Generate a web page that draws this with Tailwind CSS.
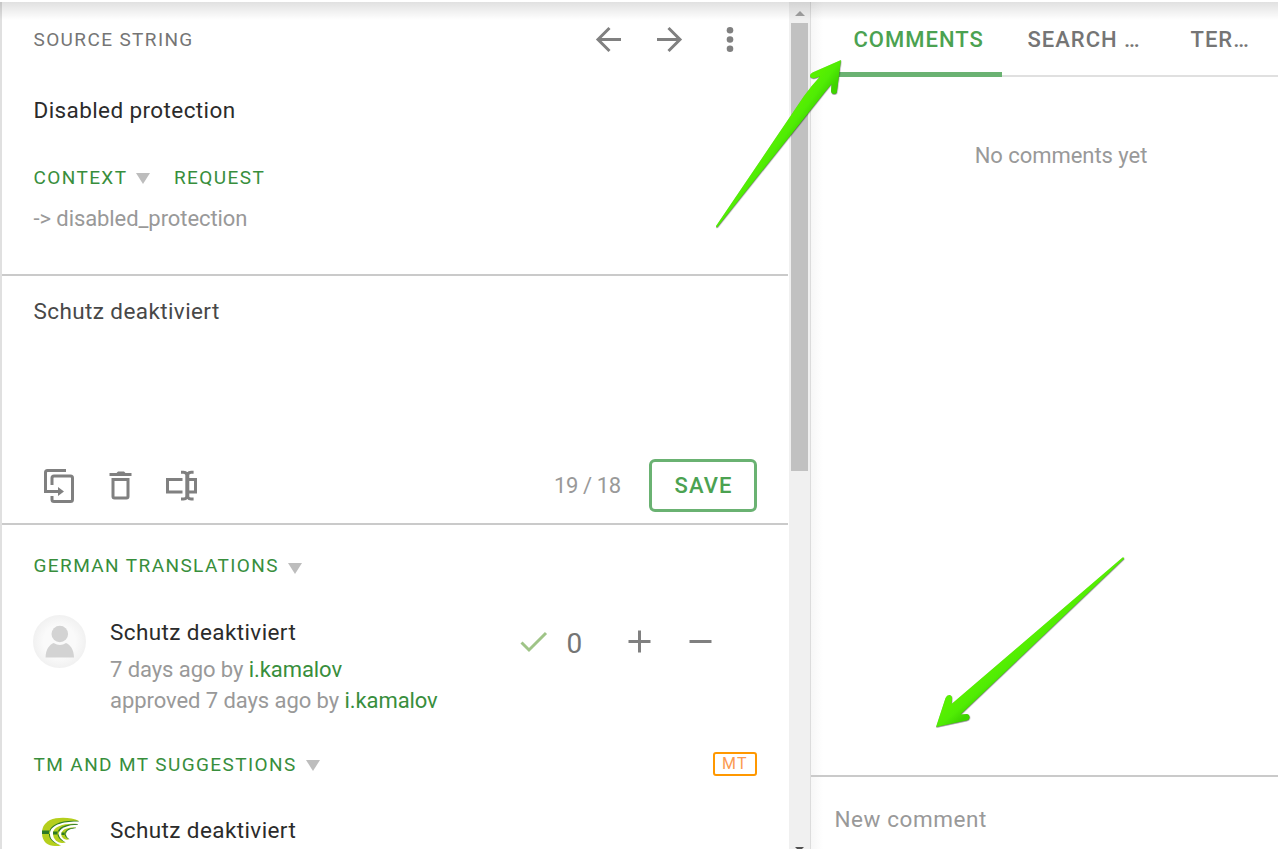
<!DOCTYPE html>
<html lang="en">
<head>
<meta charset="utf-8">
<title>Translation editor</title>
<script src="https://cdn.jsdelivr.net/npm/@tailwindcss/browser@4"></script>
</head>
<body class="relative h-[849px] w-[1278px] overflow-hidden bg-white pt-[2px] font-['Roboto',sans-serif] text-[22px] whitespace-nowrap text-[#2b2b2b]">
<div class="flex h-[847px]">
  <main class="flex w-[789px] shrink-0 flex-col overflow-hidden border-l-2 border-[#e0e0e0]">
    <section class="h-[274px] w-[786px] shrink-0 border-b-2 border-[#cacaca] pl-[31.500px]">
      <header class="flex h-[75px] items-center">
        <h2 class="w-[556.500px] pt-[2px] text-[19px] tracking-[1.38px] text-[#757575]">SOURCE STRING</h2>
        <button class="mr-[20px]"><svg class="block h-10 w-10" viewBox="0 0 40 40" fill="none" stroke="#808080" stroke-width="3"><path d="M31 19.500H9M19.500 8L8 19.500l11.500 11.500"/></svg></button>
        <button class="mr-[20px]"><svg class="block h-10 w-10" viewBox="0 0 40 40" fill="none" stroke="#808080" stroke-width="3"><path d="M7 19.500h22M18.500 8L30 19.500 18.500 31"/></svg></button>
        <button><svg class="block h-10 w-10" viewBox="0 0 40 40" fill="#808080"><circle cx="20" cy="10.200" r="3.300"/><circle cx="20" cy="19.500" r="3.300"/><circle cx="20" cy="28.800" r="3.300"/></svg></button>
      </header>
      <p class="h-[66px] text-[22.500px] leading-[66px] tracking-[0.4px]">Disabled protection</p>
      <div class="mt-[11px] flex h-[48px] items-center text-[19px] tracking-[1.4px] text-[#388e3c]">
        <span class="w-[102.500px]">CONTEXT</span>
        <svg class="mr-[24px] h-[12px] w-[14px]" viewBox="0 0 14 12"><path d="M0 1h14L7 12z" fill="#bdbdbd"/></svg>
        <span>REQUEST</span>
      </div>
      <p class="h-[34px] leading-[34px] tracking-[-0.080px] text-[#999]">-&gt; disabled_protection</p>
    </section>

    <section class="h-[249px] w-[786px] shrink-0 border-b-2 border-[#cacaca] pt-[17px] pl-[31px]">
      <p class="h-[166px] pl-[0.500px] text-[22.500px] leading-[36px] tracking-[0.4px] text-[#484848]">Schutz deaktiviert</p>
      <div class="flex h-[53px] items-center">
        <svg class="mr-[27px] h-[40px] w-[40px] overflow-visible" viewBox="0 0 40 40" fill="none" stroke="#808080" stroke-width="3"><path d="M33 4.500H14.500a2 2 0 0 0-2 2V25.500H26"/><path d="M19 19V12a2 2 0 0 1 2-2h16.500a2 2 0 0 1 2 2v21.500a2 2 0 0 1-2 2H21a2 2 0 0 1-2-2V30"/><path d="M25 21l6 4.500-6 4.500z" fill="#808080" stroke="none"/></svg>
        <svg class="mr-[20px] h-[40px] w-[40px]" viewBox="0 0 40 40" fill="#808080"><path d="M13.500 7h3l1.500-1.500h6L25.500 7h6v3h-22V7z"/><path fill-rule="evenodd" d="M11.500 12h18v18.500a3 3 0 0 1-3 3h-12a3 3 0 0 1-3-3zM14.500 15v15.500h12V15z"/></svg>
        <svg class="h-[40px] w-[40px]" viewBox="0 0 40 40" fill="none" stroke="#808080" stroke-width="3"><path d="M22.500 13.500H7.500v12.500H22.500M29 13.500h6.500v12.500H29M21 6.200h2.500q2 0 3.800 2 1.800-2 3.800-2h2.500M21 33h2.500q2 0 3.800-2 1.800 2 3.800 2h2.500"/><path d="M27.300 7v25" stroke-width="4"/></svg>
        <span class="ml-auto text-[22px] tracking-[-0.2px] [word-spacing:-0.500px] text-[#999]">19 / 18</span>
        <button class="mr-[31px] ml-[28px] h-[53px] w-[108px] rounded-[6px] border-3 border-[#6ab272] pl-[1px] font-medium tracking-[1.1px] text-[#4ba251]">SAVE</button>
      </div>
    </section>

    <section class="h-[324px] w-[786px] shrink-0 overflow-hidden pl-[31px]">
      <div class="flex h-[82px] items-center pl-[0.500px] text-[19px] tracking-[1.4px] text-[#388e3c]">
        <span class="w-[254.500px] pt-px">GERMAN TRANSLATIONS</span>
        <svg class="mt-[3px] h-[12px] w-[14px]" viewBox="0 0 14 12"><path d="M0 1h14L7 12z" fill="#bdbdbd"/></svg>
      </div>
      <div class="flex h-[125px]">
        <svg class="mt-[8px] mr-[24px] h-[53px] w-[53px] shrink-0" viewBox="0 0 53 53"><defs><radialGradient id="avatar"><stop offset=".6" stop-color="#fafafa"/><stop offset="1" stop-color="#f1f1f1"/></radialGradient></defs><circle cx="26.500" cy="26.500" r="26.500" fill="url(#avatar)"/><circle cx="26.800" cy="19" r="8.300" fill="#d3d3d3"/><path d="M12.600 42.500c0-8 4-13 8-14.500q6.500 4 12.400 0c4 1.500 8 6.500 8 14.500z" fill="#d3d3d3"/></svg>
        <div class="w-[408px]">
          <p class="mt-[5px] h-[41px] text-[22.500px] leading-[41px] tracking-[0.4px]">Schutz deaktiviert</p>
          <p class="mt-[1px] leading-[31px] tracking-[-0.070px] text-[#999]">7 days ago by <a class="text-[#388e3c]">i.kamalov</a></p>
          <p class="leading-[31px] tracking-[-0.070px] text-[#999]">approved 7 days ago by <a class="text-[#388e3c]">i.kamalov</a></p>
        </div>
        <svg class="mt-[23px] mr-[18px] h-[24px] w-[30px]" viewBox="0 0 30 24" fill="none" stroke="#9fc487" stroke-width="3"><path d="M3.500 12.500l7.500 7.500L28 3"/></svg>
        <span class="mt-[21px] w-[61px] pl-[0.500px] text-[28px] leading-[32px] text-[#757575]">0</span>
        <svg class="mt-[23px] mr-[37px] h-[24px] w-[24px]" viewBox="0 0 24 24" stroke="#808080" stroke-width="3"><path d="M1.500 11.500h22M12.500 .5v22"/></svg>
        <svg class="mt-[23px] h-[24px] w-[24px]" viewBox="0 0 24 24" stroke="#808080" stroke-width="3"><path d="M1.500 11.500h22"/></svg>
      </div>
      <div class="flex h-[64px] items-center text-[19px] tracking-[1.4px] text-[#388e3c]">
        <span class="w-[273px] pt-[2px] pl-[0.500px]">TM AND MT SUGGESTIONS</span>
        <svg class="mt-px h-[12px] w-[14px]" viewBox="0 0 14 12"><path d="M0 1h14L7 12z" fill="#bdbdbd"/></svg>
        <span class="mr-[31px] ml-auto h-[24px] w-[44px] rounded-[3px] border-2 border-[#ff9800] text-center text-[16px] leading-[20px] tracking-[1.3px] text-[#fb9a50]">MT</span>
      </div>
      <div class="flex">
        <svg class="mt-[20px] mr-[24px] ml-[8px] h-[32px] w-[45px] shrink-0" viewBox="0 0 45 32">
          <path fill="#b5cf1d" d="M38 5C30 1 16 1 9 4 2 8 1 13 1 17c0 9 6 13 13 13 3 0 5 0 6-1L38 5z"/>
          <path fill="#2d7a25" d="M1 14.500h8v3.500H1zM38 5C22 3.500 8.500 8 8 17c-.5 6 4 10 12 12.300L38 5z"/>
          <path fill="#fff" d="M39 5.500C24 4.800 9.500 8.500 9 17c-.5 6 4 10 12 12.800L40 12z"/>
          <path fill="#b5cf1d" d="M37 8C26 6.500 12 9.500 12 17.200c0 6 4 9.300 9 9.800 1.500 0 2.500 0 3.500-.7z"/>
          <path fill="#2d7a25" d="M12 15.500h6v3h-6zM37 8.200C26 7.500 16.500 11 16.500 17.500c0 4 3 7 8 8.800z"/>
          <path fill="#fff" d="M38 8.700C27 8.500 18 12 17.700 17.500c0 4 3 6.800 8 9.500L39 14z"/>
          <path fill="#b5cf1d" d="M35 11.500c-8-.5-14.500 1.500-14.700 6.500 0 3.500 2.500 5.500 5.700 5.800l2-.6z"/>
          <path fill="#2d7a25" d="M20.500 16.500h4V19h-4zM35 11.700C29 11.500 23.700 13.500 23.700 18c0 2.500 1.500 4 4.500 5.200z"/>
          <path fill="#fff" d="M36 12.200C30 12.300 25 14 25 18c0 2.500 1.500 4 4.300 5.600z"/>
        </svg>
        <p class="mt-[14px] h-[40px] text-[22.500px] leading-[41px] tracking-[0.4px]">Schutz deaktiviert</p>
      </div>
    </section>
  </main>

  <div class="flex w-[21px] shrink-0 flex-col items-center bg-[#f0f0f0]">
    <div class="flex h-[21px] items-center pt-[2px]"><svg class="h-[5px] w-[10px]" viewBox="0 0 10 5"><path d="M0 5h10L5 0z" fill="#a0a0a0"/></svg></div>
    <div class="h-[448px] w-[17px] bg-[#c1c1c1]"></div>
    <svg class="mt-auto h-[2px] w-[9px]" viewBox="0 0 9 2"><path d="M0 0h9L7 2H2z" fill="#505050"/></svg>
  </div>

  <aside class="flex w-[468px] flex-col border-l border-[#dcdcdc] bg-linear-to-r from-[#f7f7f7] to-white to-[12px]">
    <nav class="relative flex h-[75px] border-b-2 border-[#e0e0e0] font-medium tracking-[1px] text-[#757575]">
      <div class="-mb-[2px] ml-[24px] h-[75px] w-[167px] border-b-5 border-[#6ab272] pl-[18.500px] leading-[75px] text-[#4ba251]">COMMENTS</div>
      <div class="w-[163px] pl-[25.500px] leading-[75px]">SEARCH …</div>
      <div class="pl-[25.500px] leading-[75px]">TER…</div>
    </nav>
    <p class="mt-[61px] pl-[33px] text-center leading-[36px] tracking-[-0.050px] text-[#999]">No comments yet</p>
    <div class="mt-auto h-[74px] border-t-2 border-[#cacaca] pl-[23.500px] text-[22.500px] leading-[85px] tracking-[0.55px] text-[#999]">New comment</div>
  </aside>
</div>

<div class="absolute inset-x-0 top-[2px] h-[18px] bg-linear-to-b from-black/12 to-transparent"></div>
<svg class="absolute inset-0 h-[849px] w-[1278px]" viewBox="0 0 1278 849">
  <defs>
    <linearGradient id="up" gradientUnits="userSpaceOnUse" x1="780" y1="128" x2="795" y2="139"><stop offset="0" stop-color="#57f000"/><stop offset=".45" stop-color="#50ec04"/><stop offset="1" stop-color="#3ed500"/></linearGradient>
    <linearGradient id="down" gradientUnits="userSpaceOnUse" x1="1006" y1="655" x2="1019" y2="670"><stop offset="0" stop-color="#57f000"/><stop offset=".5" stop-color="#50ec04"/><stop offset="1" stop-color="#3ed500"/></linearGradient>
    <filter id="shade" x="-5%" y="-5%" width="110%" height="110%" color-interpolation-filters="sRGB"><feDropShadow dx=".3" dy=".6" stdDeviation=".4" flood-color="#000" flood-opacity=".6"/></filter>
  </defs>
  <path filter="url(#shade)" fill="url(#up)" d="M841 60L812.500 72.500Q809.500 74 810 76.500Q811.500 79 815 78L820 76.500Q812 85 804 96L716 226Q716 228 717.500 227L825 92Q829 87 831.500 84L831 91Q831.500 94 834 94Q837 94 837 91Z"/>
  <path filter="url(#shade)" fill="url(#down)" d="M936 727L945.500 698Q947 694.500 950 695Q952.500 696 952 699L951.500 704L1122.500 557.500Q1124.500 557 1124 558.800L960.500 714.500L966.500 714Q970 714.500 969.500 718Q969 720 966.500 720.500Z"/>
</svg>
</body>
</html>
